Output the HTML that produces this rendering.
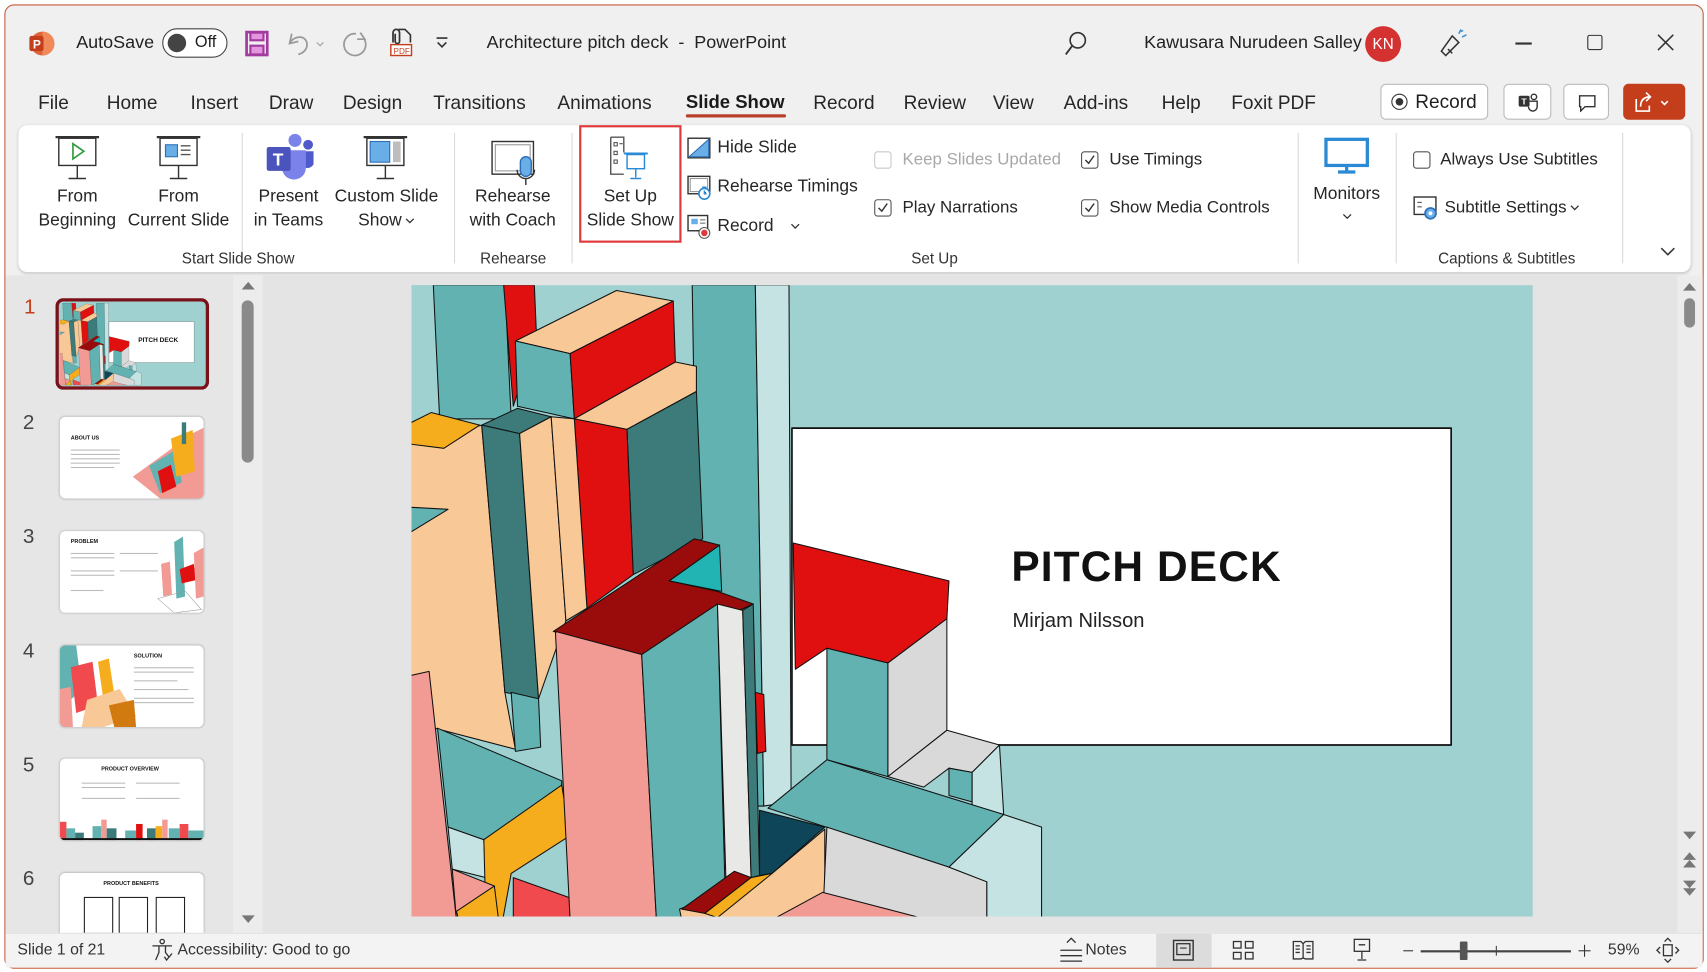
<!DOCTYPE html>
<html><head><meta charset="utf-8">
<style>
*{margin:0;padding:0;box-sizing:border-box}
html,body{width:1707px;height:972px;overflow:hidden;background:#fff}
#w{position:absolute;left:0;top:0;width:1568px;height:893px;transform:scale(1.08865,1.08847);transform-origin:0 0;font-family:"Liberation Sans",sans-serif;color:#1f1f1f}
.win{position:absolute;left:4px;top:4px;width:1561px;height:886px;border:1.5px solid #c75a3a;border-radius:9px;background:#f0f0f0;overflow:hidden}
.a{position:absolute;white-space:nowrap}
.tab{position:absolute;top:84px;font-size:17.5px;color:#262626}
.rl{position:absolute;font-size:16px;text-align:center;line-height:22px;color:#262626}
.gl{position:absolute;top:229px;font-size:14px;color:#333}
.sep{position:absolute;top:122px;width:1px;height:120px;background:#dadada}
.cb{position:absolute;width:16px;height:16px;border:1.3px solid #555;border-radius:3px;background:#fff}
.it{position:absolute;font-size:16px;color:#262626}
.th{position:absolute;left:55px;width:132px;height:75px;background:#fff;border-radius:5px;box-shadow:0 0 2px rgba(0,0,0,.25);overflow:hidden}
.num{position:absolute;left:21px;font-size:19px;color:#444}
.tt{position:absolute;font-size:5px;font-weight:bold;color:#111}
.ln{position:absolute;height:1px;background:#bbb}
.cv{display:inline-block;width:9px;height:6px;vertical-align:middle;margin-left:3px}
</style></head><body><div id="w">
<div class="win"></div>

<!-- Title bar -->
<svg class="a" style="left:26px;top:28px" width="24" height="24" viewBox="0 0 24 24"><circle cx="13" cy="12" r="11" fill="#e0643a"/><path d="M13 1a11 11 0 0 1 0 22z" fill="#f08a5a"/><rect x="1" y="5" width="13" height="14" rx="2" fill="#c43e1c"/><text x="4.2" y="16.5" font-size="11" font-weight="bold" fill="#fff" font-family="Liberation Sans">P</text></svg>
<div class="a" style="left:70px;top:30px;font-size:16.5px">AutoSave</div>
<div class="a" style="left:149px;top:26px;width:60px;height:27px;border:1.5px solid #444;border-radius:14px;background:#fff"><div style="position:absolute;left:4px;top:3.5px;width:17px;height:17px;border-radius:50%;background:#444"></div><span style="position:absolute;left:29px;top:3px;font-size:15px">Off</span></div>
<svg class="a" style="left:225px;top:28px" width="22" height="24" viewBox="0 0 22 24"><rect x="1.5" y="1.5" width="19" height="21" fill="none" stroke="#a23ba0" stroke-width="2.5"/><rect x="5" y="2" width="12" height="7" fill="#e495e0" stroke="#a23ba0" stroke-width="2"/><rect x="5" y="14" width="12" height="8" fill="#e495e0" stroke="#a23ba0" stroke-width="2"/></svg>
<svg class="a" style="left:262px;top:28px" width="40" height="24" viewBox="0 0 40 24"><path d="M6 3 L4 12 L12 10 M4 12 C8 4 20 4 20 13 C20 18 16 21 12 22" fill="none" stroke="#999" stroke-width="1.6"/><path d="M29 11 l3 3 l3 -3" fill="none" stroke="#aaa" stroke-width="1.2"/></svg>
<svg class="a" style="left:313px;top:27px" width="28" height="26" viewBox="0 0 28 26"><path d="M18 3 L22 9 L15 9 M21 8 A10 10 0 1 1 14 4" fill="none" stroke="#999" stroke-width="1.6"/></svg>
<svg class="a" style="left:356px;top:25px" width="24" height="28" viewBox="0 0 24 28"><path d="M5 14 V5 a3 3 0 0 1 6 0 V13 a2 2 0 0 1 -4 0 V6" fill="none" stroke="#333" stroke-width="1.6"/><path d="M10 2 h6 l5 5 v7" fill="none" stroke="#333" stroke-width="1.5"/><rect x="3" y="16" width="19" height="10" fill="#fff" stroke="#c43e1c" stroke-width="1.3"/><text x="5.5" y="24.5" font-size="7.5" fill="#c43e1c" font-family="Liberation Sans">PDF</text></svg>
<svg class="a" style="left:399px;top:33px" width="14" height="14" viewBox="0 0 14 14"><path d="M2 2 h10 M3 6 l4 4 l4 -4" fill="none" stroke="#333" stroke-width="1.5"/></svg>
<div class="a" style="left:447px;top:30px;font-size:16.5px;color:#222">Architecture pitch deck &nbsp;- &nbsp;PowerPoint</div>
<svg class="a" style="left:976px;top:27px" width="24" height="26" viewBox="0 0 24 26"><circle cx="14" cy="10" r="7" fill="none" stroke="#333" stroke-width="1.5"/><path d="M9 15 L3 23" stroke="#333" stroke-width="1.7"/></svg>
<div class="a" style="left:1051px;top:30px;font-size:16.5px;color:#222">Kawusara Nurudeen Salley</div>
<div class="a" style="left:1254px;top:24px;width:33px;height:33px;border-radius:50%;background:#d43131;color:#fff;font-size:14px;text-align:center;line-height:33px">KN</div>
<svg class="a" style="left:1320px;top:25px" width="28" height="30" viewBox="0 0 28 30"><path d="M8 26 L4 22 L14 8 L20 14 Z M10 20 l4 4" fill="none" stroke="#333" stroke-width="1.4"/><path d="M20 6 l2 -4 M23 9 l4 -2 M22 4 l2 -1" stroke="#3a8fd6" stroke-width="1.4"/></svg>
<div class="a" style="left:1392px;top:39px;width:15px;height:1.5px;background:#333"></div>
<div class="a" style="left:1458px;top:32px;width:14px;height:14px;border:1.4px solid #333;border-radius:2px"></div>
<svg class="a" style="left:1522px;top:31px" width="16" height="16" viewBox="0 0 16 16"><path d="M1 1 L15 15 M15 1 L1 15" stroke="#333" stroke-width="1.4"/></svg>

<!-- Tabs -->
<div class="tab" style="left:35px">File</div>
<div class="tab" style="left:98px">Home</div>
<div class="tab" style="left:175px">Insert</div>
<div class="tab" style="left:247px">Draw</div>
<div class="tab" style="left:315px">Design</div>
<div class="tab" style="left:398px">Transitions</div>
<div class="tab" style="left:512px">Animations</div>
<div class="tab" style="left:630px;font-weight:bold;font-size:17px;color:#1a1a1a">Slide Show</div>
<div class="a" style="left:630px;top:105px;width:92px;height:3px;background:#b8402a;border-radius:2px"></div>
<div class="tab" style="left:747px">Record</div>
<div class="tab" style="left:830px">Review</div>
<div class="tab" style="left:912px">View</div>
<div class="tab" style="left:977px">Add-ins</div>
<div class="tab" style="left:1067px">Help</div>
<div class="tab" style="left:1131px">Foxit PDF</div>
<div class="a" style="left:1268px;top:77px;width:99px;height:33px;border:1px solid #bbb;border-radius:5px;background:#fff"><div style="position:absolute;left:9px;top:8px;width:15px;height:15px;border:1.5px solid #333;border-radius:50%"><div style="position:absolute;left:2.5px;top:2.5px;width:7px;height:7px;border-radius:50%;background:#333"></div></div><span style="position:absolute;left:31px;top:5px;font-size:17.5px">Record</span></div>
<div class="a" style="left:1381px;top:77px;width:44px;height:33px;border:1px solid #bbb;border-radius:5px;background:#fff"><svg style="position:absolute;left:12px;top:7px" width="20" height="18" viewBox="0 0 20 18"><rect x="1" y="3" width="10" height="10" rx="1.5" fill="#333"/><text x="3.5" y="11" font-size="8" font-weight="bold" fill="#fff" font-family="Liberation Sans">T</text><circle cx="15" cy="4" r="2.5" fill="none" stroke="#333" stroke-width="1.3"/><path d="M11 8 h7 v5 a4 4 0 0 1 -8 0" fill="none" stroke="#333" stroke-width="1.3"/></svg></div>
<div class="a" style="left:1436px;top:77px;width:42px;height:33px;border:1px solid #bbb;border-radius:5px;background:#fff"><svg style="position:absolute;left:13px;top:9px" width="16" height="16" viewBox="0 0 16 16"><path d="M1 1 h14 v10 h-9 l-4 4 v-4 h-1 z" fill="none" stroke="#333" stroke-width="1.3"/></svg></div>
<div class="a" style="left:1491px;top:77px;width:57px;height:33px;border-radius:5px;background:#c43e1c"><svg style="position:absolute;left:10px;top:7px" width="36" height="20" viewBox="0 0 36 20"><path d="M2 7 v11 h12 v-5 M6 14 c0 -6 3 -9 9 -9 M11 1 l4 4 l-4 4" fill="none" stroke="#fff" stroke-width="1.5"/><path d="M25 9 l3 3 l3 -3" fill="none" stroke="#fff" stroke-width="1.5"/></svg></div>

<!-- Ribbon -->
<div class="a" style="left:17px;top:115px;width:1536px;height:135px;background:#fff;border-radius:8px;box-shadow:0 1px 3px rgba(0,0,0,.2)"></div>
<svg class="a" style="left:50px;top:124px" width="42" height="42" viewBox="0 0 42 42"><path d="M1 2 h40" stroke="#333" stroke-width="2"/><rect x="4" y="3" width="34" height="25" fill="#fff" stroke="#333" stroke-width="1.3"/><path d="M17 8 l10 7 l-10 7 z" fill="#fff" stroke="#2e9a3e" stroke-width="1.5"/><path d="M21 28 v12 M13 40 h16" stroke="#333" stroke-width="1.3"/></svg>
<div class="rl" style="left:26px;top:170px;width:90px">From<br>Beginning</div>
<svg class="a" style="left:143px;top:124px" width="42" height="42" viewBox="0 0 42 42"><path d="M1 2 h40" stroke="#333" stroke-width="2"/><rect x="4" y="3" width="34" height="25" fill="#fff" stroke="#333" stroke-width="1.3"/><rect x="9" y="9" width="11" height="11" fill="#6aaee8" stroke="#2b6fb8" stroke-width="1"/><path d="M23 10 h9 M23 14 h9 M23 18 h9" stroke="#555" stroke-width="1.3"/><path d="M21 28 v12 M13 40 h16" stroke="#333" stroke-width="1.3"/></svg>
<div class="rl" style="left:112px;top:170px;width:104px">From<br>Current Slide</div>
<div class="sep" style="left:222px"></div>
<svg class="a" style="left:243px;top:122px" width="46" height="44" viewBox="0 0 46 44"><circle cx="28" cy="7" r="6" fill="#7b83eb"/><circle cx="40" cy="11" r="4.5" fill="#5059c9"/><path d="M33 17 h12 v12 a7 7 0 0 1 -12 0 z" fill="#5059c9"/><path d="M16 16 h22 v16 a11 11 0 0 1 -22 0 z" fill="#7b83eb"/><rect x="2" y="13" width="22" height="22" rx="2" fill="#4b53bc"/><text x="7.5" y="30" font-size="16" font-weight="bold" fill="#fff" font-family="Liberation Sans">T</text></svg>
<div class="rl" style="left:225px;top:170px;width:80px">Present<br>in Teams</div>
<svg class="a" style="left:333px;top:124px" width="42" height="42" viewBox="0 0 42 42"><path d="M1 2 h40" stroke="#333" stroke-width="2"/><rect x="4" y="3" width="34" height="25" fill="#fff" stroke="#333" stroke-width="1.3"/><rect x="7" y="6" width="18" height="19" fill="#6aaee8" stroke="#2b6fb8"/><rect x="28" y="6" width="7" height="19" fill="#bdbdbd"/><path d="M21 28 v12 M13 40 h16" stroke="#333" stroke-width="1.3"/></svg>
<div class="rl" style="left:300px;top:170px;width:110px">Custom Slide<br>Show<svg class="cv" viewBox="0 0 9 6"><path d="M1 1 l3.5 3.5 l3.5 -3.5" fill="none" stroke="#333" stroke-width="1.2"/></svg></div>
<div class="sep" style="left:417px"></div>
<svg class="a" style="left:450px;top:128px" width="46" height="44" viewBox="0 0 46 44"><rect x="2" y="2" width="38" height="30" fill="#fff" stroke="#333" stroke-width="1.3"/><rect x="5" y="5" width="32" height="24" fill="none" stroke="#999" stroke-width="1"/><rect x="28" y="16" width="10" height="18" rx="5" fill="#6aaee8" stroke="#2b6fb8" stroke-width="1.3"/><path d="M25 28 a8 8 0 0 0 16 0 M33 36 v6" fill="none" stroke="#333" stroke-width="1.3"/></svg>
<div class="rl" style="left:426px;top:170px;width:90px">Rehearse<br>with Coach</div>
<div class="sep" style="left:525px"></div>
<div class="a" style="left:532px;top:115px;width:94px;height:108px;border:2px solid #e0393c"></div>
<svg class="a" style="left:558px;top:124px" width="40" height="42" viewBox="0 0 40 42"><path d="M3 2 h12 v14 M3 2 v34 h12" fill="none" stroke="#555" stroke-width="1.3"/><rect x="6" y="7" width="3" height="3" fill="none" stroke="#555"/><rect x="6" y="15" width="3" height="3" fill="none" stroke="#555"/><rect x="6" y="23" width="3" height="3" fill="none" stroke="#555"/><path d="M11 8 h3" stroke="#555"/><path d="M15 17 h22" stroke="#2a8ad4" stroke-width="1.8"/><rect x="18" y="18" width="16" height="13" fill="#fff" stroke="#2a8ad4" stroke-width="1.3"/><path d="M26 31 v8 M21 40 h10" stroke="#2a8ad4" stroke-width="1.3"/></svg>
<div class="rl" style="left:532px;top:170px;width:94px">Set Up<br>Slide Show</div>
<svg class="a" style="left:631px;top:126px" width="22" height="20" viewBox="0 0 22 20"><rect x="1" y="1" width="20" height="18" fill="#fff" stroke="#333" stroke-width="1.3"/><path d="M2 18 L20 2 V18 Z" fill="#6aaee8" stroke="#2b6fb8"/></svg>
<div class="it" style="left:659px;top:127px">Hide Slide</div>
<svg class="a" style="left:631px;top:161px" width="24" height="24" viewBox="0 0 24 24"><rect x="1" y="1" width="20" height="16" fill="#fff" stroke="#333" stroke-width="1.3"/><rect x="3" y="3" width="16" height="12" fill="none" stroke="#999"/><circle cx="16" cy="17" r="5" fill="#fff" stroke="#2a8ad4" stroke-width="1.5"/><path d="M16 14 v3 h2 M14 11 h4" stroke="#2a8ad4" stroke-width="1.3"/></svg>
<div class="it" style="left:659px;top:163px">Rehearse Timings</div>
<svg class="a" style="left:631px;top:197px" width="24" height="24" viewBox="0 0 24 24"><rect x="1" y="1" width="18" height="14" fill="#fff" stroke="#333" stroke-width="1.3"/><rect x="4" y="4" width="6" height="5" fill="#6aaee8"/><path d="M12 5 h5 M12 8 h5" stroke="#666"/><circle cx="16" cy="17" r="5" fill="#fff" stroke="#555"/><circle cx="16" cy="17" r="3" fill="#e0393c"/></svg>
<div class="it" style="left:659px;top:199px">Record</div>
<svg class="a" style="left:726px;top:205px" width="9" height="6" viewBox="0 0 9 6"><path d="M1 1 l3.5 3.5 l3.5 -3.5" fill="none" stroke="#333" stroke-width="1.2"/></svg>
<div class="cb" style="left:803px;top:139px;border-color:#c8c8c8"></div>
<div class="it" style="left:829px;top:138px;color:#a8a8a8;font-size:15.5px">Keep Slides Updated</div>
<div class="cb" style="left:803px;top:183px"><svg width="14" height="14" viewBox="0 0 14 14" style="position:absolute;left:0;top:0"><path d="M3 7 l3 3 l5 -7" fill="none" stroke="#333" stroke-width="1.3"/></svg></div>
<div class="it" style="left:829px;top:182px;font-size:15.5px">Play Narrations</div>
<div class="cb" style="left:993px;top:139px"><svg width="14" height="14" viewBox="0 0 14 14" style="position:absolute;left:0;top:0"><path d="M3 7 l3 3 l5 -7" fill="none" stroke="#333" stroke-width="1.3"/></svg></div>
<div class="it" style="left:1019px;top:138px;font-size:15.5px">Use Timings</div>
<div class="cb" style="left:993px;top:183px"><svg width="14" height="14" viewBox="0 0 14 14" style="position:absolute;left:0;top:0"><path d="M3 7 l3 3 l5 -7" fill="none" stroke="#333" stroke-width="1.3"/></svg></div>
<div class="it" style="left:1019px;top:182px;font-size:15.5px">Show Media Controls</div>
<div class="sep" style="left:1192px"></div>
<svg class="a" style="left:1216px;top:126px" width="42" height="34" viewBox="0 0 42 34"><rect x="2" y="2" width="38" height="24" fill="#fff" stroke="#2a8ad4" stroke-width="3"/><path d="M21 26 v5 M13 32 h16" stroke="#2a8ad4" stroke-width="3"/></svg>
<div class="rl" style="left:1197px;top:168px;width:80px">Monitors</div>
<svg class="a" style="left:1233px;top:196px" width="9" height="6" viewBox="0 0 9 6"><path d="M1 1 l3.5 3.5 l3.5 -3.5" fill="none" stroke="#333" stroke-width="1.2"/></svg>
<div class="sep" style="left:1282px"></div>
<div class="cb" style="left:1298px;top:139px"></div>
<div class="it" style="left:1323px;top:138px;font-size:15.5px">Always Use Subtitles</div>
<svg class="a" style="left:1298px;top:180px" width="26" height="24" viewBox="0 0 26 24"><rect x="1" y="1" width="20" height="16" fill="#fff" stroke="#333" stroke-width="1.3"/><path d="M4 6 h4 M4 10 h4" stroke="#555"/><circle cx="16" cy="16" r="5" fill="#6aaee8" stroke="#2b6fb8" stroke-width="1.5"/><circle cx="16" cy="16" r="1.8" fill="#fff"/></svg>
<div class="it" style="left:1327px;top:182px;font-size:15.5px">Subtitle Settings<svg class="cv" viewBox="0 0 9 6"><path d="M1 1 l3.5 3.5 l3.5 -3.5" fill="none" stroke="#333" stroke-width="1.2"/></svg></div>
<div class="sep" style="left:1490px"></div>
<svg class="a" style="left:1525px;top:226px" width="14" height="10" viewBox="0 0 14 10"><path d="M1 2 l6 6 l6 -6" fill="none" stroke="#333" stroke-width="1.4"/></svg>
<div class="gl" style="left:167px">Start Slide Show</div>
<div class="gl" style="left:441px">Rehearse</div>
<div class="gl" style="left:837px">Set Up</div>
<div class="gl" style="left:1321px">Captions &amp; Subtitles</div>

<!-- Content backgrounds -->
<div class="a" style="left:5px;top:253px;width:209px;height:604px;background:#e6e6e6"></div>
<div class="a" style="left:214px;top:253px;width:27px;height:604px;background:#ececec"></div>
<div class="a" style="left:241px;top:253px;width:1300px;height:604px;background:#e4e4e4"></div>
<div class="a" style="left:1541px;top:253px;width:23px;height:604px;background:#ececec"></div>
<svg class="a" style="left:221px;top:257px" width="14" height="10" viewBox="0 0 14 10"><path d="M1 9 L7 2 L13 9 Z" fill="#777"/></svg>
<div class="a" style="left:222px;top:276px;width:11px;height:149px;border-radius:6px;background:#8a8a8a"></div>
<svg class="a" style="left:221px;top:840px" width="14" height="10" viewBox="0 0 14 10"><path d="M1 1 L7 8 L13 1 Z" fill="#777"/></svg>
<svg class="a" style="left:1545px;top:258px" width="14" height="10" viewBox="0 0 14 10"><path d="M1 9 L7 2 L13 9 Z" fill="#777"/></svg>
<div class="a" style="left:1547px;top:274px;width:10px;height:27px;border-radius:5px;background:#8a8a8a"></div>
<svg class="a" style="left:1545px;top:763px" width="14" height="10" viewBox="0 0 14 10"><path d="M1 1 L7 8 L13 1 Z" fill="#777"/></svg>
<svg class="a" style="left:1545px;top:782px" width="14" height="42" viewBox="0 0 14 42"><path d="M1 8 L7 1 L13 8 Z M1 15 L7 8 L13 15 Z M1 27 L7 34 L13 27 Z M1 34 L7 41 L13 34 Z" fill="#777"/></svg>

<svg width="0" height="0" style="position:absolute"><defs><symbol id="art" viewBox="3.6 12.4 2663 1500">
<g stroke="#111" stroke-width="2.5" stroke-linejoin="round">
<rect x="0" y="0" width="2700" height="1530" fill="#9fd1d1" stroke="none"/>
<polygon points="0,12 225,12 240,330 70,330 0,340" fill="#9fd1d1" stroke="none"/>
<polygon points="55,12 225,12 240,330 70,330" fill="#62b2b2"/>
<polygon points="222,12 295,12 300,130 245,300" fill="#e01010"/>
<polygon points="670,12 820,12 840,1250 690,1250" fill="#62b2b2"/>
<polygon points="820,12 900,12 905,1240 840,1250" fill="#c5e3e3"/>
<polygon points="250,145 490,25 625,50 380,175" fill="#f8c996"/>
<polygon points="250,145 380,175 390,330 255,300" fill="#62b2b2"/>
<polygon points="380,175 625,50 630,195 390,330" fill="#e01010"/>
<polygon points="390,330 630,195 680,205 680,265 515,355" fill="#f8c996"/>
<polygon points="515,355 680,265 695,615 530,700" fill="#3d7b7b"/>
<polygon points="390,330 515,355 530,700 420,780" fill="#e01010"/>
<polygon points="0,390 170,345 225,980 250,1115 0,1050" fill="#f8c996"/>
<polygon points="0,340 50,315 165,345 80,400 0,390" fill="#f5ad1d"/>
<polygon points="0,540 90,545 0,600" fill="#62b2b2"/>
<polygon points="170,345 255,305 335,325 260,365" fill="#3d7b7b"/>
<polygon points="170,345 260,365 305,995 225,980" fill="#3d7b7b"/>
<polygon points="260,365 335,325 370,810 305,995" fill="#f8c996"/>
<polygon points="335,325 390,330 420,780 370,810" fill="#f8c996"/>
<polygon points="240,980 305,995 310,1110 250,1120" fill="#62b2b2"/>
<polygon points="0,940 45,930 110,1520 0,1520" fill="#f29a94"/>
<polygon points="65,1065 360,1190 360,1210 175,1330 90,1300" fill="#62b2b2"/>
<polygon points="90,1300 175,1330 180,1420 100,1400" fill="#c5e3e3"/>
<polygon points="175,1330 360,1200 380,1320 240,1410 220,1520 180,1520" fill="#f5ad1d"/>
<polygon points="100,1400 200,1440 200,1520 110,1520" fill="#f29a94"/>
<polygon points="110,1500 200,1440 210,1520 115,1520" fill="#f5ad1d"/>
<polygon points="245,1420 385,1470 525,1520 245,1520" fill="#f04a4e"/>
<polygon points="615,715 735,630 740,740" fill="#22b3b3"/>
<polygon points="340,835 675,615 735,630 615,715 730,740 815,770 550,890" fill="#9a0b0b"/>
<polygon points="345,835 550,890 585,1520 380,1520" fill="#f29a94"/>
<polygon points="550,890 730,770 750,1520 585,1520" fill="#62b2b2"/>
<polygon points="730,770 790,785 810,1420 750,1420" fill="#e8e8e6"/>
<polygon points="790,785 815,770 830,1415 810,1420" fill="#3d7b7b"/>
<polygon points="820,980 840,985 845,1120 825,1125" fill="#e01010"/>
<polygon points="830,1260 985,1300 860,1410 830,1415" fill="#0e4558"/>
<polygon points="640,1495 860,1410 985,1305 985,1520 645,1520" fill="#f8c996"/>
<polygon points="645,1495 770,1405 810,1420 700,1505" fill="#9a0b0b"/>
<polygon points="700,1505 810,1420 860,1410 730,1515" fill="#f5ad1d"/>
<rect x="907" y="352" width="1566" height="753" fill="#fff" stroke-width="4"/>
<polygon points="910,625 1280,715 1275,805 1135,910 990,875 915,925" fill="#e01010"/>
<polygon points="990,875 1135,910 1135,1180 990,1140" fill="#62b2b2"/>
<polygon points="1135,910 1275,805 1275,1070 1135,1180" fill="#d9d9d9"/>
<polygon points="1135,1180 1275,1070 1400,1105 1335,1170 1280,1160 1220,1205" fill="#d9d9d9"/>
<polygon points="1280,1160 1335,1170 1335,1240 1280,1225" fill="#62b2b2"/>
<polygon points="1335,1170 1400,1105 1410,1270 1335,1250" fill="#c5e3e3"/>
<polygon points="850,1255 990,1140 1410,1270 1280,1395" fill="#62b2b2"/>
<polygon points="990,1300 1280,1395 1370,1430 1370,1520 980,1520" fill="#d9d9d9"/>
<polygon points="1280,1395 1410,1270 1500,1300 1500,1520 1370,1520 1370,1430" fill="#c5e3e3"/>
<polygon points="860,1520 980,1455 1230,1520" fill="#f29a94"/>
</g>
</symbol></defs></svg>

<svg class="a" style="left:378px;top:262px" width="1030" height="580" viewBox="0 0 1030 580"><use href="#art" x="0" y="0" width="1030" height="580"/></svg>
<div class="a" style="left:929px;top:500px;font-size:39px;font-weight:bold;color:#111;letter-spacing:1px">PITCH DECK</div>
<div class="a" style="left:930px;top:559px;font-size:18.5px;color:#222">Mirjam Nilsson</div>

<!-- Thumbnails -->
<div class="num" style="left:22px;top:272px;color:#c43e1c">1</div>
<div class="a" style="left:51px;top:274px;width:141px;height:84px;border:3px solid #7a1018;border-radius:7px;overflow:hidden;background:#9fd1d1"><svg style="position:absolute;left:1px;top:1px" width="133" height="76" viewBox="0 0 133 76"><use href="#art" x="0" y="0" width="133" height="76"/></svg><div class="tt" style="left:73px;top:33px;font-size:6px">PITCH DECK</div></div>
<div class="num" style="top:378px">2</div>
<div class="th" style="top:383px"><div class="tt" style="left:10px;top:17px">ABOUT US</div><div class="ln" style="left:10px;top:30px;width:45px"></div><div class="ln" style="left:10px;top:34px;width:45px"></div><div class="ln" style="left:10px;top:38px;width:45px"></div><div class="ln" style="left:10px;top:42px;width:45px"></div><div class="ln" style="left:10px;top:46px;width:40px"></div><svg style="position:absolute;left:62px;top:0" width="70" height="75" viewBox="0 0 70 75"><polygon points="5,55 60,15 70,10 70,75 30,75" fill="#f29a94"/><polygon points="20,45 45,30 50,60 30,70" fill="#62b2b2"/><polygon points="40,20 60,12 62,50 45,55" fill="#f5ad1d"/><polygon points="28,50 40,44 45,64 32,70" fill="#e01010"/><rect x="50" y="5" width="4" height="20" fill="#3d7b7b"/></svg></div>
<div class="num" style="top:483px">3</div>
<div class="th" style="top:488px"><div class="tt" style="left:10px;top:7px">PROBLEM</div><div class="ln" style="left:10px;top:20px;width:40px"></div><div class="ln" style="left:10px;top:24px;width:40px"></div><div class="ln" style="left:10px;top:36px;width:40px"></div><div class="ln" style="left:10px;top:40px;width:40px"></div><div class="ln" style="left:10px;top:54px;width:30px"></div><div class="ln" style="left:55px;top:20px;width:35px"></div><div class="ln" style="left:55px;top:36px;width:35px"></div><svg style="position:absolute;left:85px;top:0" width="47" height="75" viewBox="0 0 47 75"><polygon points="20,10 28,5 30,60 22,62" fill="#62b2b2"/><polygon points="8,30 16,28 18,58 10,60" fill="#f29a94"/><polygon points="25,35 38,30 40,45 27,48" fill="#e01010"/><polygon points="38,20 47,15 47,60 40,62" fill="#f29a94"/><polygon points="5,62 30,55 45,72 20,75" fill="none" stroke="#999" stroke-width=".5"/></svg></div>
<div class="num" style="top:588px">4</div>
<div class="th" style="top:593px"><svg style="position:absolute;left:0;top:0" width="70" height="75" viewBox="0 0 70 75"><polygon points="0,0 15,0 20,40 0,60" fill="#62b2b2"/><polygon points="10,20 30,15 35,55 15,62" fill="#f04a4e"/><polygon points="35,15 45,12 50,45 40,50" fill="#f5ad1d"/><polygon points="25,50 55,40 70,65 40,75 20,75" fill="#f8c996"/><polygon points="0,40 10,38 12,75 0,75" fill="#f29a94"/><polygon points="45,55 68,50 70,75 50,75" fill="#d07a10"/></svg><div class="tt" style="left:68px;top:7px">SOLUTION</div><div class="ln" style="left:68px;top:20px;width:55px"></div><div class="ln" style="left:68px;top:24px;width:55px"></div><div class="ln" style="left:68px;top:32px;width:40px"></div><div class="ln" style="left:68px;top:40px;width:50px"></div><div class="ln" style="left:68px;top:48px;width:55px"></div><div class="ln" style="left:68px;top:52px;width:55px"></div></div>
<div class="num" style="top:693px">5</div>
<div class="th" style="top:697px"><div class="tt" style="left:38px;top:7px">PRODUCT OVERVIEW</div><div class="ln" style="left:20px;top:22px;width:40px"></div><div class="ln" style="left:20px;top:26px;width:40px"></div><div class="ln" style="left:20px;top:36px;width:40px"></div><div class="ln" style="left:70px;top:22px;width:40px"></div><div class="ln" style="left:70px;top:36px;width:40px"></div><svg style="position:absolute;left:0;top:50px" width="132" height="25" viewBox="0 0 132 25"><g fill="#62b2b2"><rect x="0" y="8" width="6" height="17" fill="#f04a4e"/><rect x="6" y="14" width="8" height="11"/><rect x="14" y="18" width="8" height="7" fill="#3d7b7b"/><rect x="30" y="12" width="8" height="13"/><rect x="38" y="6" width="5" height="19" fill="#f29a94"/><rect x="43" y="14" width="9" height="11" fill="#3d7b7b"/><rect x="60" y="16" width="10" height="9"/><rect x="70" y="10" width="6" height="15" fill="#e01010"/><rect x="80" y="14" width="8" height="11" fill="#3d7b7b"/><rect x="88" y="12" width="6" height="13" fill="#f5ad1d"/><rect x="94" y="6" width="5" height="19" fill="#f29a94"/><rect x="100" y="14" width="10" height="11"/><rect x="110" y="10" width="8" height="15" fill="#f04a4e"/><rect x="118" y="16" width="14" height="9"/></g><rect x="0" y="23" width="132" height="2" fill="#111"/></svg></div>
<div class="num" style="top:797px">6</div>
<div class="th" style="top:802px;height:56px;border-radius:5px 5px 0 0"><div class="tt" style="left:40px;top:7px">PRODUCT BENEFITS</div><div class="a" style="left:22px;top:22px;width:27px;height:34px;border:1px solid #222"></div><div class="a" style="left:54px;top:22px;width:27px;height:34px;border:1px solid #222"></div><div class="a" style="left:88px;top:22px;width:27px;height:34px;border:1px solid #222"></div></div>

<!-- Status bar -->
<div class="a" style="left:5px;top:857px;width:1559px;height:32px;background:#f3f3f3;border-top:1px solid #e2e2e2"></div>
<div class="a" style="left:16px;top:865px;font-size:14.5px;color:#333">Slide 1 of 21</div>
<svg class="a" style="left:138px;top:862px" width="22" height="22" viewBox="0 0 22 22"><circle cx="11" cy="3" r="2" fill="none" stroke="#333" stroke-width="1.2"/><path d="M2 7 h18 M8 7 v6 l-3 7 M14 7 v6 l3 4 M13 17 l2 3 l5 -6" fill="none" stroke="#333" stroke-width="1.2"/></svg>
<div class="a" style="left:163px;top:865px;font-size:14.5px;color:#333">Accessibility: Good to go</div>
<svg class="a" style="left:972px;top:860px" width="24" height="26" viewBox="0 0 24 26"><path d="M8 6 l4 -4 l4 4 M2 13 h20 M2 18 h20 M2 23 h20" fill="none" stroke="#333" stroke-width="1.2"/></svg>
<div class="a" style="left:997px;top:865px;font-size:14.5px;color:#333">Notes</div>
<div class="a" style="left:1062px;top:858px;width:51px;height:31px;background:#dcdcdc"></div>
<svg class="a" style="left:1077px;top:863px" width="20" height="20" viewBox="0 0 20 20"><rect x="1" y="1" width="18" height="18" fill="none" stroke="#333" stroke-width="1.3"/><rect x="4" y="4" width="12" height="10" fill="none" stroke="#333" stroke-width="1.2"/><path d="M7 8 h6" stroke="#333"/></svg>
<svg class="a" style="left:1132px;top:863px" width="20" height="20" viewBox="0 0 20 20"><rect x="1" y="2" width="7" height="6" fill="none" stroke="#333" stroke-width="1.2"/><rect x="12" y="2" width="7" height="6" fill="none" stroke="#333" stroke-width="1.2"/><rect x="1" y="12" width="7" height="6" fill="none" stroke="#333" stroke-width="1.2"/><rect x="12" y="12" width="7" height="6" fill="none" stroke="#333" stroke-width="1.2"/></svg>
<svg class="a" style="left:1187px;top:863px" width="20" height="20" viewBox="0 0 20 20"><path d="M1 2 h7 l2 2 l2 -2 h7 v16 h-7 l-2 -1 l-2 1 h-7 z M10 4 v13 M3 6 h4 M3 9 h4 M3 12 h4 M13 6 h4 M13 9 h4 M13 12 h4" fill="none" stroke="#333" stroke-width="1.2"/></svg>
<svg class="a" style="left:1241px;top:862px" width="20" height="22" viewBox="0 0 20 22"><rect x="3" y="1" width="14" height="11" fill="none" stroke="#333" stroke-width="1.2"/><path d="M7 6 h6 M10 12 v7 M6 20 h8" stroke="#333" stroke-width="1.2"/></svg>
<div class="a" style="left:1289px;top:873px;width:9px;height:1px;background:#333"></div>
<div class="a" style="left:1305px;top:873px;width:138px;height:1.5px;background:#444"></div>
<div class="a" style="left:1341px;top:865px;width:7px;height:17px;background:#555;border-radius:1px"></div>
<div class="a" style="left:1374px;top:869px;width:1px;height:9px;background:#444"></div>
<div class="a" style="left:1450px;top:873px;width:11px;height:1px;background:#333"></div>
<div class="a" style="left:1455px;top:868px;width:1px;height:11px;background:#333"></div>
<div class="a" style="left:1477px;top:865px;font-size:14.5px;color:#333">59%</div>
<svg class="a" style="left:1521px;top:860px" width="22" height="26" viewBox="0 0 22 26"><path d="M8 5 l3 -3 l3 3 M8 21 l3 3 l3 -3 M4 10 l-3 3 l3 3 M18 10 l3 3 l-3 3" fill="none" stroke="#333" stroke-width="1.2"/><rect x="7" y="8" width="8" height="10" fill="none" stroke="#333" stroke-width="1.2"/></svg>
</div></body></html>
